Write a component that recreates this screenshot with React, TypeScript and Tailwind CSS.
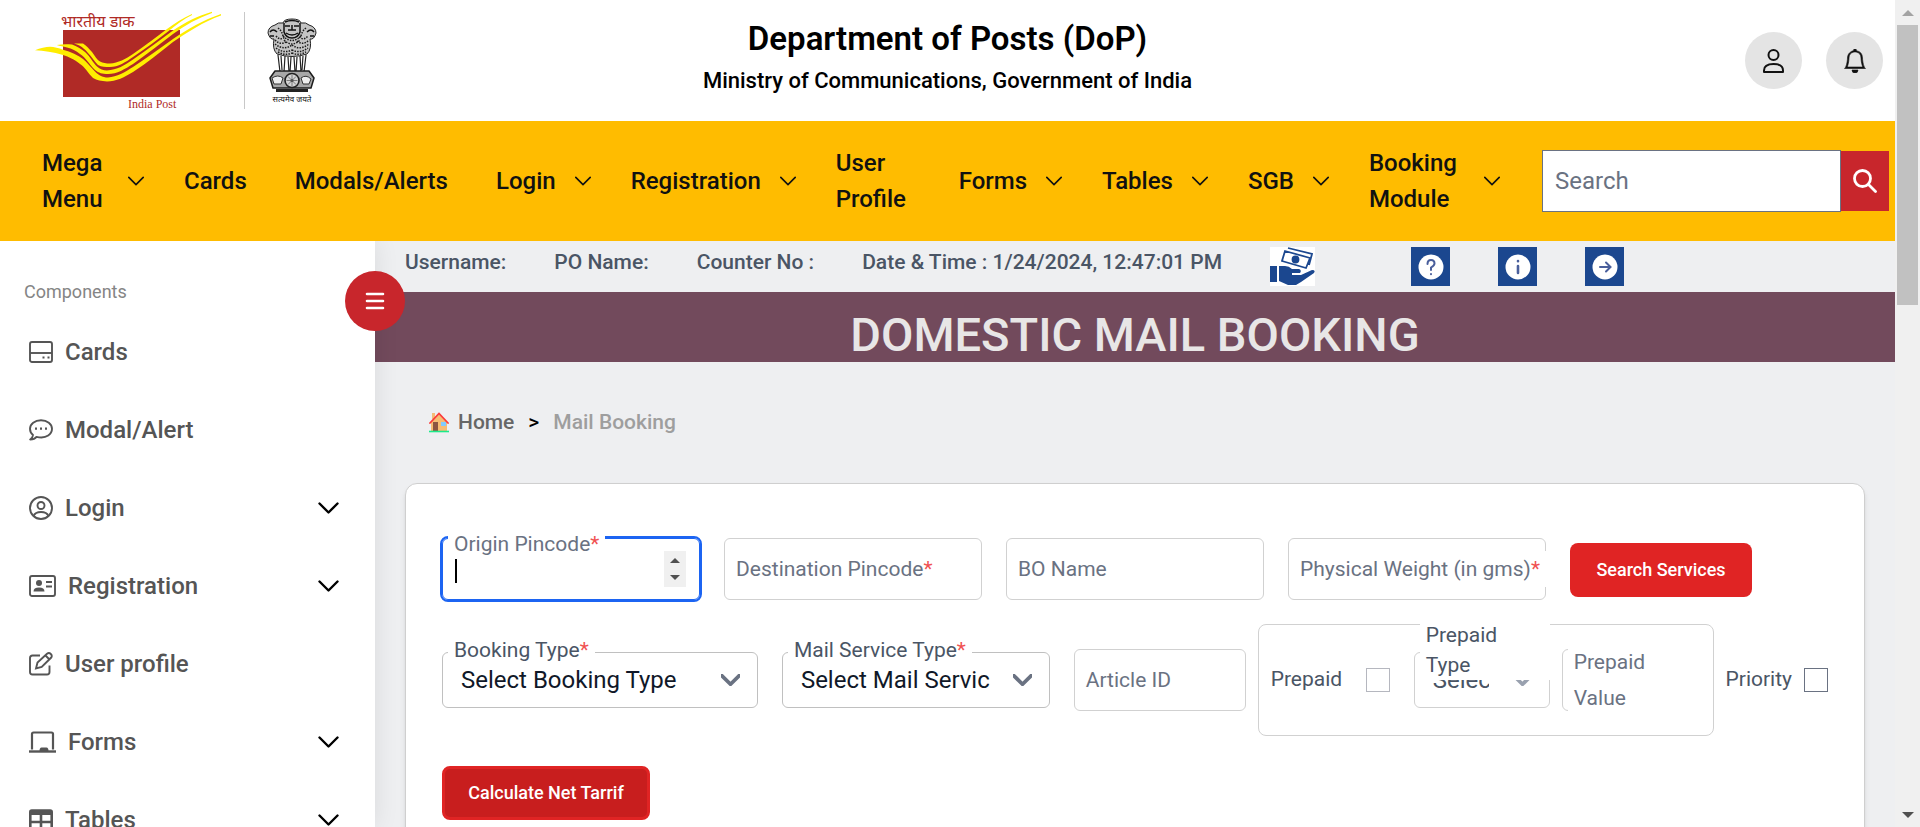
import React from "react";
import { BsBell } from "react-icons/bs";

type NavEntry = { label: string; menu?: boolean; width?: string };

const navEntries: NavEntry[] = [
  { label: "Mega Menu", menu: true, width: "w-[67px]" },
  { label: "Cards" },
  { label: "Modals/Alerts" },
  { label: "Login", menu: true },
  { label: "Registration", menu: true },
  { label: "User Profile", width: "w-[75px]" },
  { label: "Forms", menu: true },
  { label: "Tables", menu: true },
  { label: "SGB", menu: true },
  { label: "Booking Module", menu: true, width: "w-24" },
];

function Chevron({ className, stroke = 2 }: { className: string; stroke?: number }) {
  return (
    <svg viewBox="0 0 20 12" fill="none" stroke="currentColor" strokeWidth={stroke} strokeLinecap="round" strokeLinejoin="round" className={className} aria-hidden="true">
      <path d="M1 1.5l9 9 9-9" />
    </svg>
  );
}

function PostLogo() {
  return (
    <svg viewBox="0 0 187 100" className="h-[100px] w-[187px]" role="img" aria-label="India Post">
      <text x="26" y="16" fontSize="16" fill="#b02a26" fontFamily="'Noto Sans Devanagari','Noto Sans','Liberation Serif',serif">भारतीय डाक</text>
      <rect x="28" y="19" width="117" height="67" fill="#b02a26" />
      <g fill="#ffed00">
        <path d="M0 39.300C5 37 11 35.700 15 35.700C19 36 24 37 28 38.700C36 41 43 44 48 48C55 54 60 62 65 64.500C68 66 70 66.500 73 66.500C82 66 90 61 98 56C112 47 125 37 138 28C153 18 168 9 186 3V4.500C168 11 153 21 138 31C125 41 112 52 98 61C90 66 81 70.500 72 70.500C66 70 62 69.500 58 67C53 62 50 56 45 53C39 48 34 46 28 44C18 41 9 40 0 39.300Z" />
        <path d="M21.700 34C27 33 32 33 37 33.500C42 35 46 38 50 41C55 45 58 52 62 55.500C65 58 68 59.500 72 59.500C82 59 90 54 98 48.500C112 39 125 29 138 19.500C150 11 163 5 177 .7V2C163 7 150 14 138 23C125 33 112 43 98 53C90 58 82 63 73 63C67 63 64 62 60 59C54 53 51 47 45 43C41 40 37 37.500 32 36.500C28 35.500 25 35 21.700 34Z" />
        <path d="M39 32.500H48C52 35 54 38 57 41C60 45 62 49 65 50.500C68 52 71 52.500 75 52.500C83 52 91 48 98 43C110 35 121 26 132 18C140 12 148 7 157 3V4C149 8 141 14 133 20.500C122 29 110 38 98 46C91 51 83 56 75 56C70 56 67 56 63 54C59 50 57 46 53 42C50 38 45 34 39 32.500Z" />
      </g>
      <text x="93" y="97" fontSize="12" fill="#b02a26" fontFamily="'Liberation Serif',serif">India Post</text>
    </svg>
  );
}

function Emblem() {
  return (
    <svg viewBox="0 0 50 86" className="h-[86px] w-[50px]" role="img" aria-label="State Emblem of India">
      <path d="M16 5Q11 4 8 7Q1 9 1 15Q3 22 7 21Q5 31 10 36Q25 41 40 36Q45 31 43 21Q47 22 49 15Q49 9 42 7Q39 4 34 5Q33 1 25 1T16 5Z" fill="#c4c4c4" stroke="#222" strokeWidth="1" />
      <g fill="none" stroke="#1c1c1c" strokeWidth="1.500" strokeDasharray="1.500 1.200">
        <path d="M9 18q4 5 9 1M32 19q5 4 9-1M8 22q6 6 12 1M30 23q6 5 12-1M8 26q9 7 17 1M25 27q8 6 17-1M9 30q8 6 16 2M25 32q8 4 16-2M11 34q7 4 14 1M25 35q7 3 14-1M11 10q4 3 5 8M39 10q-4 3-5 8M16 18q9 9 18 0M17 22q8 8 16 0" />
      </g>
      <path d="M3 14q3-4 7 0M40 14q4-4 7 0M3 18h4M43 18h4M18 4q7-3 14 0M18 8h5M27 8h5M21 12h8M19 15q6 4 12 0M25 7v5M17 5v9q2 6 8 6t8-6V5" stroke="#111" strokeWidth="1.500" fill="none" />
      <path d="M11 37L13 54M14 38l1 14M18 38l-1 16M21 39l1 15M24 39l-1 15M27 39l1 15M30 39l-1 15M33 38l1 16M36 38l-1 14M39 37l-2 17" stroke="#222" strokeWidth="1.200" />
      <path d="M8 53h34l5 7-3 10H6L3 60z" fill="#a8a8a8" stroke="#1c1c1c" strokeWidth="1.500" strokeLinejoin="round" />
      <path d="M5 60q6-4 11 0l-2 6H7zM34 60q5-4 10 1l-2 5h-6z" stroke="#333" strokeWidth="1" fill="#eee" />
      <circle cx="25" cy="62.500" r="7" fill="#d4d4d4" stroke="#222" strokeWidth="1.600" />
      <circle cx="25" cy="62.500" r="1.500" fill="#444" />
      <path d="M25 57v11M19.500 62.500h11M21 58.500l8 8M29 58.500l-8 8" stroke="#555" strokeWidth="0.700" />
      <path d="M9 71h32v3H9z" fill="#222" />
      <text x="25" y="84" fontSize="8" textAnchor="middle" fill="#111" fontFamily="'Noto Sans Devanagari','Noto Sans',sans-serif">सत्यमेव जयते</text>
    </svg>
  );
}

const iconProps = { viewBox: "0 0 24 24", fill: "none", stroke: "currentColor", strokeWidth: 1.9, className: "h-6 w-6", "aria-hidden": true } as const;

const sidebarItems = [
  { label: "Cards", icon: <svg {...iconProps}><rect x="1" y="2" width="22" height="20" rx="2" /><path d="M1 13h22" /><path d="M13.500 17.500h2M18.500 17.500h2" strokeWidth="2" /></svg> },
  { label: "Modal/Alert", icon: <svg {...iconProps}><path d="M12 2.200C5.800 2.200 1 6 1 10.800C1 13.500 2.300 15.700 4 17C3.800 19 3 20.500 1.200 21.600C4.500 21.500 6.300 20.500 7.500 18.900C18 21.500 23 15.500 23 10.800C23 6 18.200 2.200 12 2.200Z" strokeLinejoin="round" /><path d="M6 10.600h2M11 10.600h2M16 10.600h2" strokeWidth="2.200" /></svg> },
  { label: "Login", menu: true, icon: <svg {...iconProps}><circle cx="12" cy="12" r="11" /><circle cx="12" cy="9.500" r="3.500" /><path d="M4.500 20C6 16.500 9 16 12 16s6 .5 7.500 4" /></svg> },
  { label: "Registration", menu: true, icon: <svg {...iconProps} viewBox="0 0 27 24" className="h-6 w-[27px]"><rect x="1" y="2" width="25" height="20" rx="2" /><g fill="currentColor" stroke="none"><circle cx="10" cy="9" r="3" /><path d="M4.500 17.500q0-4 5.500-4t5.500 4z" /><path d="M17 7h6v2h-6zM17 11.500h6v2h-6z" /></g></svg> },
  { label: "User profile", icon: <svg {...iconProps}><path d="M11 3.500H3.500Q1 3.500 1 6v14q0 2.500 2.500 2.500H18q2.500 0 2.500-2.500v-6.500" /><path d="M7 16.500l1.500-6L18 1.800q2-1.500 3.800.2t.2 3.800L12.700 15zM16.500 3.500l4 4" /></svg> },
  { label: "Forms", menu: true, icon: <svg {...iconProps} viewBox="0 0 27 24" className="h-6 w-[27px]" strokeWidth={2.200}><path d="M3 19.500V4q0-1.500 1.500-1.500h18Q24 2.500 24 4v15.500" /><path d="M0 21.500h27" strokeWidth="2.400" /><path d="M10.500 21q0-3.500 2-3.500h5q2 0 2 3.500z" fill="currentColor" stroke="none" /></svg> },
  { label: "Tables", menu: true, icon: <svg {...iconProps} strokeWidth={2.600}><rect x="1.300" y="2.500" width="21.400" height="19" rx="1.500" /><path d="M1 5h22" strokeWidth="4" /><path d="M1 14h22M12 5v17" /></svg> },
];

function Field({ id, label, required, className }: { id: string; label: string; required?: boolean; className: string }) {
  return (
    <div className={`relative ${className}`}>
      <input id={id} type="text" className="block h-[62px] w-full rounded-md border border-[#d1d1d1] bg-white px-3 outline-none" />
      <label htmlFor={id} className="absolute left-[6px] top-1/2 -translate-y-1/2 whitespace-nowrap bg-white px-[6px] py-[3px] leading-[30px] text-gray-500">
        {label}{required && <span className="text-[#f05252]">*</span>}
      </label>
    </div>
  );
}

function SelectField({ id, label, option, className }: { id: string; label: string; option: string; className: string }) {
  return (
    <div className={`relative ${className}`}>
      <select id={id} className="block h-14 w-full appearance-none rounded-md border border-[#c0c0c0] bg-white outline-none">
        <option label=" "></option>
      </select>
      <span className="pointer-events-none absolute left-[19px] right-[60px] top-[10px] overflow-hidden whitespace-nowrap text-2xl leading-9 text-gray-900">{option}</span>
      <Chevron stroke={4} className="pointer-events-none absolute right-[18px] top-[22px] h-3 w-[19px] text-gray-500" />
      <label htmlFor={id} className="absolute -top-[17px] left-[6px] bg-white px-[6px] leading-[30px] text-gray-600">
        {label}<span className="text-[#f05252]">*</span>
      </label>
    </div>
  );
}

function InfoButton({ label, children }: { label: string; children: React.ReactNode }) {
  return (
    <button type="button" aria-label={label} className="flex h-[39px] w-[39px] items-center justify-center bg-[#1b478f]">
      <svg viewBox="0 0 26 26" className="h-[26px] w-[26px]" fill="none" stroke="#4a5f9c" strokeWidth="2" strokeLinecap="round">
        <circle cx="13" cy="13" r="12.500" fill="#fff" stroke="none" />
        {children}
      </svg>
    </button>
  );
}

export default function App() {
  return (
    <div className="flex h-screen overflow-hidden bg-[#eeeff1] font-['Roboto',sans-serif] text-[21px] text-gray-900">
      <div className="flex min-w-0 flex-1 flex-col">
        <header className="grid h-[121px] shrink-0 grid-cols-[1fr_auto_1fr] items-center bg-white">
          <div className="flex items-center pl-[35px]">
            <PostLogo />
            <span className="ml-[22px] mr-[22px] h-[97px] w-px bg-[#c8c8c8]" />
            <Emblem />
          </div>
          <div className="pb-1 text-center text-black">
            <h1 className="text-[33px] font-semibold leading-[44px]">Department of Posts (DoP)</h1>
            <p className="text-[22px] font-medium leading-10">Ministry of Communications, Government of India</p>
          </div>
          <div className="flex justify-end gap-6 pr-3">
            <button type="button" aria-label="Account" className="flex h-[57px] w-[57px] items-center justify-center rounded-full bg-[#e4e4e4]">
              <svg viewBox="0 0 21 24" className="h-6 w-[21px]" fill="none" stroke="#111" strokeWidth="2"><circle cx="10.500" cy="6" r="5" /><path d="M1 23v-1.500C1 17 5 15 10.500 15S20 17 20 21.500V23z" strokeLinejoin="round" /></svg>
            </button>
            <button type="button" aria-label="Notifications" className="flex h-[57px] w-[57px] items-center justify-center rounded-full bg-[#e4e4e4]">
              <BsBell className="h-6 w-6 text-[#111]" stroke="#111" strokeWidth={0.4} />
            </button>
          </div>
        </header>

        <nav className="relative z-20 flex h-[120px] shrink-0 items-center bg-[#ffbc00] pl-[42px] pr-[6px]">
          <ul className="flex flex-1 items-center gap-10 text-2xl font-medium leading-9 text-[#111]">
            {navEntries.map((n) => (
              <li key={n.label} className={n.menu ? "" : "pr-2"}>
                <a href="#" className="flex items-center gap-[19px]">
                  <span className={n.width}>{n.label}</span>
                  {n.menu && <Chevron className="h-[10px] w-4" />}
                </a>
              </li>
            ))}
          </ul>
          <form className="flex items-center">
            <input type="search" aria-label="Search" placeholder="Search" className="h-[62px] w-[299px] border border-gray-500 bg-white px-3 text-2xl outline-none placeholder:text-gray-500" />
            <button type="button" aria-label="Submit search" className="flex h-[60px] w-12 items-center justify-center bg-[#c8262c]">
              <svg viewBox="0 0 24 24" className="h-6 w-6" fill="none" stroke="#fff" strokeWidth="2.800" strokeLinecap="round"><circle cx="9.500" cy="9.500" r="8" /><path d="M15.500 15.500l7 7" /></svg>
            </button>
          </form>
        </nav>

        <div className="flex min-h-0 flex-1">
          <aside className="relative z-10 w-[375px] shrink-0 bg-white shadow-[0_0_24px_rgba(0,0,0,0.09)]">
            <button type="button" aria-label="Toggle sidebar" className="absolute -right-[30px] top-[30px] flex h-[60px] w-[60px] items-center justify-center rounded-full bg-[#c8262c]">
              <svg viewBox="0 0 20 18" className="h-[18px] w-5" stroke="#fff" strokeWidth="2.600" strokeLinecap="round"><path d="M2 2h16M2 9h16M2 16h16" /></svg>
            </button>
            <div className="h-full overflow-hidden">
              <h2 className="pl-6 pt-9 text-lg leading-[30px] text-[#858585]">Components</h2>
              <ul className="mt-[6px] text-2xl font-medium text-[#555]">
                {sidebarItems.map((s) => (
                  <li key={s.label}>
                    <a href="#" className="flex h-[78px] items-center gap-3 pl-[29px] pr-9">
                      {s.icon}
                      <span className="flex-1">{s.label}</span>
                      {s.menu && <Chevron stroke={2.4} className="h-3 w-[21px] text-black" />}
                    </a>
                  </li>
                ))}
              </ul>
            </div>
          </aside>

          <main className="min-w-0 flex-1 overflow-hidden">
            <div className="flex h-[51px] items-start gap-12 pl-[30px] pt-[6px] font-medium text-gray-600">
              <span className="leading-[30px]">Username:</span>
              <span className="leading-[30px]">PO Name:</span>
              <span className="leading-[30px]">Counter No :</span>
              <span className="leading-[30px]">Date &amp; Time : 1/24/2024, 12:47:01 PM</span>
              <svg viewBox="0 0 45 39" className="mr-12 h-[39px] w-[45px] bg-white" fill="none" stroke="#1b478f" strokeWidth="1.800" role="img" aria-label="Cash">
                <path d="M15 4l25 7-4 10-24-7zM18 1l24 6-3 11" />
                <circle cx="25.500" cy="12.500" r="3" fill="#1b478f" />
                <path d="M0 19h7v16H0z" fill="#1b478f" stroke="none" />
                <path d="M9 19h6q4 0 7 3h7q3 1 1 4h-8v2h9l11-5q4 0 2 3L31 35l-5 3h-8l-9-4z" fill="#1b478f" stroke="none" />
              </svg>
              <InfoButton label="Help"><path d="M9.500 10q0-4 3.500-4t3.500 3.500q0 2-3.500 4V16M13 20v.2" /></InfoButton>
              <InfoButton label="Information"><path d="M13 12v7M13 7v.2" strokeWidth="2.600" /></InfoButton>
              <InfoButton label="Continue"><path d="M8 13h10M14 8.500l4.500 4.500-4.500 4.500" /></InfoButton>
            </div>
            <h2 className="h-[70px] bg-[#724a5c] pt-2 text-center text-[47px] font-medium leading-[70px] text-[#e8e6e6]">DOMESTIC MAIL BOOKING</h2>

            <div className="px-[30px]">
              <nav aria-label="Breadcrumb" className="flex h-[121px] items-center pl-6 font-medium">
                <svg viewBox="0 0 20 21" className="mr-[9px] h-[21px] w-5" aria-hidden="true">
                  <path d="M3 1h3v6H3z" fill="#f4bc78" />
                  <path d="M2 10l8-8 8 8v9H2z" fill="#f7bd74" />
                  <path d="M4 10h5v9H4z" fill="#8d5542" />
                  <path d="M12 10h5v4h-5z" fill="#82cbff" />
                  <path d="M1 11l9-9.500 9 9.500" fill="none" stroke="#fb3a3a" strokeWidth="1.800" strokeLinecap="round" />
                  <path d="M0 19.500h20" stroke="#1bea8b" strokeWidth="1.600" />
                </svg>
                <a href="#" className="text-[#666]">Home</a>
                <span className="mx-[14px] text-black">&gt;</span>
                <span className="text-[#9e9e9e]">Mail Booking</span>
              </nav>

              <form className="h-[400px] rounded-xl border border-[#cfcfcf] bg-white px-9 pt-[54px] shadow-md">
                <div className="flex items-center gap-6">
                  <div className="relative max-w-[258px] flex-1">
                    <input id="origin" type="text" inputMode="numeric" className="block h-[62px] w-full rounded-md border border-[#1c64f2] bg-white px-3 outline-2 outline-[#1c64f2]" />
                    <span className="pointer-events-none absolute left-[13px] top-[21px] h-6 w-[2px] bg-black" />
                    <span className="absolute right-[14px] top-[13px] flex h-9 w-[22px] flex-col items-center justify-between bg-[#f0f0f0] py-[7px]">
                      <svg viewBox="0 0 10 5" className="h-[5px] w-[10px]" fill="#505050"><path d="M0 5l5-5 5 5z" /></svg>
                      <svg viewBox="0 0 10 5" className="h-[5px] w-[10px]" fill="#505050"><path d="M0 0l5 5 5-5z" /></svg>
                    </span>
                    <label htmlFor="origin" className="absolute -top-2 left-[6px] bg-white px-[6px] leading-[28px] text-gray-500">Origin Pincode<span className="text-[#f05252]">*</span></label>
                  </div>
                  <Field id="destination" label="Destination Pincode" required className="max-w-[258px] flex-1" />
                  <Field id="bo" label="BO Name" className="max-w-[258px] flex-1" />
                  <Field id="weight" label="Physical Weight (in gms)" required className="max-w-[258px] flex-1" />
                  <button type="button" className="mt-[2px] h-[54px] w-[182px] rounded-lg bg-[#e02424] text-lg font-medium text-white">Search Services</button>
                </div>

                <div className="mt-6 flex items-center">
                  <SelectField id="bookingType" label="Booking Type" option="Select Booking Type" className="mr-6 w-[316px]" />
                  <SelectField id="serviceType" label="Mail Service Type" option="Select Mail Service Type" className="mr-6 w-[268px]" />
                  <Field id="article" label="Article ID" className="mr-3 w-[172px]" />
                  <div className="mr-3 flex h-28 w-[456px] items-center rounded-lg border border-[#d1d1d1] pl-3 pr-[11px]">
                    <label htmlFor="prepaid" className="w-[95px] text-gray-600">Prepaid</label>
                    <input id="prepaid" type="checkbox" className="mr-6 h-6 w-6 appearance-none border border-[#b5b7bf] bg-white" />
                    <div className="relative mr-3 w-[136px]">
                      <select id="prepaidType" className="block h-14 w-full appearance-none rounded-md border border-[#d1d1d1] bg-white"><option label=" "></option></select>
                      <span className="pointer-events-none absolute left-[19px] top-[10px] w-14 overflow-hidden whitespace-nowrap text-2xl leading-9 text-gray-600">Select</span>
                      <Chevron stroke={4} className="pointer-events-none absolute right-[18px] top-[22px] h-3 w-[19px] text-gray-400" />
                      <label htmlFor="prepaidType" className="absolute -top-8 left-[6px] w-[130px] bg-white pl-[6px] pr-10 leading-[30px] text-gray-600">Prepaid Type</label>
                    </div>
                    <div className="relative flex-1">
                      <input id="prepaidValue" type="text" className="block h-[62px] w-full rounded-md border border-[#d1d1d1] bg-white" />
                      <label htmlFor="prepaidValue" className="absolute -top-[5px] left-[6px] w-[135px] bg-white pl-[6px] pr-10 leading-9 text-gray-500">Prepaid Value</label>
                    </div>
                  </div>
                  <label htmlFor="priority" className="mr-3 text-gray-600">Priority</label>
                  <input id="priority" type="checkbox" className="h-6 w-6 shrink-0 appearance-none border border-gray-500 bg-white" />
                </div>

                <button type="button" className="mt-[30px] h-[54px] w-[208px] rounded-lg border-[3px] border-[#e02424] bg-[#c81e1e] text-lg font-medium text-white">Calculate Net Tarrif</button>
              </form>
            </div>
          </main>
        </div>
      </div>

      <div className="flex w-[25px] shrink-0 flex-col items-center bg-[#f0f0f0]" aria-hidden="true">
        <span className="flex h-[25px] items-center"><svg viewBox="0 0 12 6" className="h-[6px] w-3" fill="#a3a3a3"><path d="M0 6l6-6 6 6z" /></svg></span>
        <span className="h-[280px] w-[21px] bg-[#c1c1c1]" />
        <span className="mt-auto flex h-[25px] items-center"><svg viewBox="0 0 12 6" className="h-[6px] w-3" fill="#505050"><path d="M0 0l6 6 6-6z" /></svg></span>
      </div>
    </div>
  );
}
